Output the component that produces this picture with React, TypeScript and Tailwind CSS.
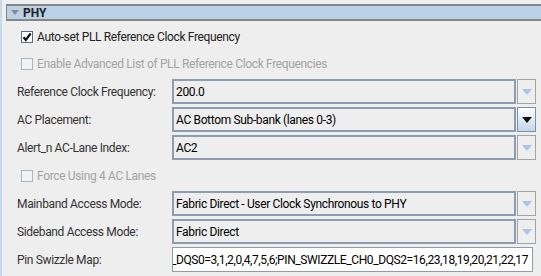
import React from 'react';

const font = { fontFamily: 'Roboto, "Noto Sans", sans-serif' };

const Arrow: React.FC<{ enabled?: boolean }> = ({ enabled }) => (
  <svg width="10" height="6" viewBox="0 0 10 6">
    <polygon points="0,0 10,0 5,6" fill={enabled ? '#111111' : '#a9c6e3'} />
  </svg>
);

const Check: React.FC<{ checked?: boolean; disabled?: boolean; label: string; h: string }> = ({ checked, disabled, label, h }) => (
  <div className={`flex items-center pl-[19px] ${h}`}>
    <div
      className={`w-[12px] h-[12px] shrink-0 border flex items-center justify-center ${
        disabled ? 'border-[#a9b6c4] bg-[#f2f2f2]' : 'border-[#5c6c80] bg-white'
      }`}
    >
      {checked && (
        <svg width="10" height="10" viewBox="0 0 10 10">
          <path d="M1.5 5.2 L3.8 8 L8.6 1.5" stroke="#111" strokeWidth="2.2" fill="none" />
        </svg>
      )}
    </div>
    <span className={`ml-[4px] text-[12px] tracking-[-0.35px] ${disabled ? 'text-[#a3a3a3]' : 'text-[#222]'}`}>{label}</span>
  </div>
);

const Combo: React.FC<{ label: string; value: string; enabled?: boolean }> = ({ label, value, enabled }) => (
  <div className="flex items-center h-[25px]">
    <div className="w-[170px] shrink-0 pl-[15px] text-[12px] tracking-[-0.35px] text-[#333]">{label}</div>
    <div className="flex shrink-0 h-[25px] w-[364px]">
      <div className="flex-1 flex items-center border-2 border-[#8d9cb0] bg-[#eeeeee] pl-[2px] text-[12px] tracking-[-0.35px] text-black">
        {value}
      </div>
      <div
        className={`w-[19px] ml-[1px] flex items-center justify-center border ${
          enabled
            ? 'border-[#7f91a8] bg-gradient-to-b from-white to-[#c3d5ea]'
            : 'border-[#a4a4a4] bg-[#eeeeee]'
        }`}
      >
        <Arrow enabled={enabled} />
      </div>
    </div>
  </div>
);

export default function App() {
  const swizzle = 'PIN_SWIZZLE_CH0_DQS0=3,1,2,0,4,7,5,6;PIN_SWIZZLE_CH0_DQS2=16,23,18,19,20,21,22,17';
  return (
    <div className="w-[541px] h-[276px] bg-[#eeeeee] border-l-2 border-[#c7d8ec] overflow-hidden" style={font}>
      <div className="ml-[4px] mt-[4px] h-[17px] flex items-center bg-[#b9d0e7] border-y-2 border-l border-[#868686]">
        <svg width="8" height="5" viewBox="0 0 8 5" className="ml-[4px]">
          <polygon points="0,0 8,0 4,5" fill="#8b8b8b" />
        </svg>
        <span className="ml-[4px] text-[12px] font-bold text-[#222]">PHY</span>
      </div>

      <Check checked label="Auto-set PLL Reference Clock Frequency" h="h-[32px]" />
      <Check disabled label="Enable Advanced List of PLL Reference Clock Frequencies" h="h-[22px]" />

      <div className="mt-[4px] flex flex-col gap-[3px]">
        <Combo label="Reference Clock Frequency:" value="200.0" />
        <Combo label="AC Placement:" value="AC Bottom Sub-bank (lanes 0-3)" enabled />
        <Combo label="Alert_n AC-Lane Index:" value="AC2" />
      </div>

      <Check disabled label="Force Using 4 AC Lanes" h="h-[31px]" />

      <div className="flex flex-col gap-[3px]">
        <Combo label="Mainband Access Mode:" value="Fabric Direct - User Clock Synchronous to PHY" />
        <Combo label="Sideband Access Mode:" value="Fabric Direct" />
        <div className="flex items-center h-[25px]">
          <div className="w-[170px] shrink-0 pl-[15px] text-[12px] tracking-[-0.35px] text-[#333]">Pin Swizzle Map:</div>
          <div className="w-[361px] shrink-0 h-[25px] flex justify-end items-center overflow-hidden border border-[#8d9cb0] bg-white pr-[4px] text-[12px] tracking-[-0.4px] text-black whitespace-nowrap">
            <span>{swizzle}</span>
          </div>
        </div>
      </div>
    </div>
  );
}
